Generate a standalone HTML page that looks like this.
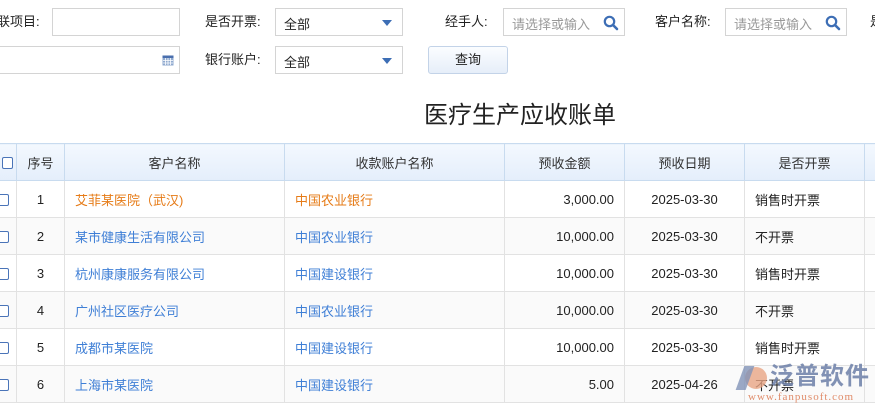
<!DOCTYPE html>
<html style="overflow:hidden;width:875px;height:412px"><head><meta charset="utf-8">
<style>
*{box-sizing:border-box;margin:0;padding:0}
body{width:875px;height:412px;overflow:hidden;background:#fff;font-family:"Liberation Sans","Noto Sans CJK SC",sans-serif;font-size:13px;color:#222;position:relative}
.a{position:absolute}
.lbl{position:absolute;font-size:13px;color:#222;line-height:16px}
.inp{position:absolute;border:1px solid #d4d4d4;background:#fff;height:28px}
.sel span{position:absolute;left:8px;top:5px;font-size:13px}
.arr{position:absolute;right:10px;top:11px;width:0;height:0;border-left:5px solid transparent;border-right:5px solid transparent;border-top:6px solid #3d6eb5}
.ph{position:absolute;left:8px;top:5px;color:#999;font-size:13px}
.mag{position:absolute;right:5px;top:6px;width:16px;height:16px}
table{position:absolute;left:-1px;top:143px;border-collapse:collapse;table-layout:fixed;width:895px}
td,th{border:1px solid #e2e2e2;height:37px;font-size:13px;font-weight:normal;padding:0 10px;white-space:nowrap;overflow:hidden}
th{background:linear-gradient(#f3f8fe,#e4eefb);border-color:#c8dbef;text-align:center;color:#333}
tr:nth-child(odd) td{background:#fafafa}
.c{text-align:center}.r{text-align:right}
.b{color:#3f7fd6}.o{color:#e67b17}
.cb{display:inline-block;width:11px;height:12px;border:1px solid #4a74b8;border-radius:2px;background:#fff;vertical-align:middle}
</style></head><body>
<div class="lbl" style="left:-3px;top:14px">联项目:</div>
<div class="inp" style="left:52px;top:8px;width:128px"></div>
<div class="lbl" style="left:205px;top:14px">是否开票:</div>
<div class="inp sel" style="left:275px;top:8px;width:128px"><span>全部</span><i class="arr"></i></div>
<div class="lbl" style="left:445px;top:14px">经手人:</div>
<div class="inp" style="left:503px;top:8px;width:122px"><span class="ph">请选择或输入</span>
<svg class="mag" viewBox="0 0 16 16"><circle cx="6.5" cy="6.5" r="4.7" fill="none" stroke="#3d6eb5" stroke-width="2.2"/><path d="M10 10l4 4" stroke="#3d6eb5" stroke-width="2.6" stroke-linecap="round"/></svg></div>
<div class="lbl" style="left:655px;top:14px">客户名称:</div>
<div class="inp" style="left:725px;top:8px;width:122px"><span class="ph">请选择或输入</span>
<svg class="mag" viewBox="0 0 16 16"><circle cx="6.5" cy="6.5" r="4.7" fill="none" stroke="#3d6eb5" stroke-width="2.2"/><path d="M10 10l4 4" stroke="#3d6eb5" stroke-width="2.6" stroke-linecap="round"/></svg></div>
<div class="lbl" style="left:870px;top:14px">是</div>
<div class="inp" style="left:-2px;top:46px;width:182px">
<svg class="a" style="left:163px;top:7px" width="12" height="12" viewBox="0 0 12 12"><rect x="0.5" y="1.5" width="11" height="10" fill="#8fa9cf"/><rect x="0.5" y="1.5" width="11" height="2.5" fill="#4a6fae"/><path d="M1 6.5h10M1 9h10M3.5 4v7M6 4v7M8.5 4v7" stroke="#fff" stroke-width="0.8"/></svg></div>
<div class="lbl" style="left:205px;top:52px">银行账户:</div>
<div class="inp sel" style="left:275px;top:46px;width:128px"><span>全部</span><i class="arr"></i></div>
<div class="a" style="left:428px;top:46px;width:80px;height:28px;border:1px solid #c3d3e8;border-radius:3px;background:linear-gradient(#fbfdff,#e6eef9);text-align:center;line-height:26px;font-size:13px">查询</div>
<div class="a" style="left:424px;top:101px;font-size:24px;line-height:30px;color:#222">医疗生产应收账单</div>
<table>
<colgroup><col style="width:17px"><col style="width:48px"><col style="width:220px"><col style="width:220px"><col style="width:120px"><col style="width:120px"><col style="width:120px"><col style="width:30px"></colgroup>
<tr><th style="padding:0"><span class="cb" style="margin-left:-2px"></span></th><th>序号</th><th>客户名称</th><th>收款账户名称</th><th>预收金额</th><th>预收日期</th><th>是否开票</th><th></th></tr>
<tr><td style="padding:0"><span class="cb" style="margin-left:-2px"></span></td><td class="c">1</td><td class="o">艾菲某医院（武汉)</td><td class="o">中国农业银行</td><td class="r">3,000.00</td><td class="c">2025-03-30</td><td>销售时开票</td><td></td></tr>
<tr><td style="padding:0"><span class="cb" style="margin-left:-2px"></span></td><td class="c">2</td><td class="b">某市健康生活有限公司</td><td class="b">中国农业银行</td><td class="r">10,000.00</td><td class="c">2025-03-30</td><td>不开票</td><td></td></tr>
<tr><td style="padding:0"><span class="cb" style="margin-left:-2px"></span></td><td class="c">3</td><td class="b">杭州康康服务有限公司</td><td class="b">中国建设银行</td><td class="r">10,000.00</td><td class="c">2025-03-30</td><td>销售时开票</td><td></td></tr>
<tr><td style="padding:0"><span class="cb" style="margin-left:-2px"></span></td><td class="c">4</td><td class="b">广州社区医疗公司</td><td class="b">中国农业银行</td><td class="r">10,000.00</td><td class="c">2025-03-30</td><td>不开票</td><td></td></tr>
<tr><td style="padding:0"><span class="cb" style="margin-left:-2px"></span></td><td class="c">5</td><td class="b">成都市某医院</td><td class="b">中国建设银行</td><td class="r">10,000.00</td><td class="c">2025-03-30</td><td>销售时开票</td><td></td></tr>
<tr><td style="padding:0"><span class="cb" style="margin-left:-2px"></span></td><td class="c">6</td><td class="b">上海市某医院</td><td class="b">中国建设银行</td><td class="r">5.00</td><td class="c">2025-04-26</td><td>不开票</td><td></td></tr>
</table>
<div class="a" style="left:0;top:402px;width:875px;height:10px;border-top:1px solid #e2e2e2"></div>
<div class="a" style="left:745px;top:367px;width:22px;height:22px;border-radius:50%;background:#e8a585;opacity:.8"></div>
<div class="a" style="left:740px;top:366px;width:10px;height:24px;background:#8294b8;opacity:.8;transform:skewX(-20deg)"></div>
<div class="a" style="left:770px;top:363px;font-size:24px;line-height:28px;color:#6c7fa8;opacity:.85;font-weight:bold;letter-spacing:1px">泛普软件</div>
<div class="a" style="left:748px;top:391px;font-size:11px;line-height:12px;color:#e08c6a;font-family:'Liberation Serif',serif;letter-spacing:1px">www.fanpusoft.com</div>
</body></html>
